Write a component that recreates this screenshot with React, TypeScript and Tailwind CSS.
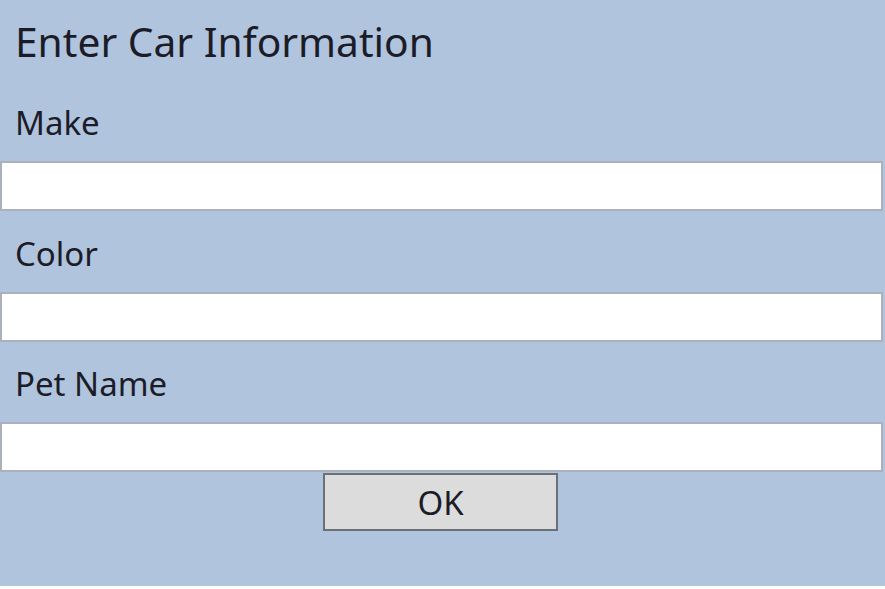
import * as React from 'react';

function Field({ label, top }: { label: string; top: string }) {
  return (
    <>
      <div className={`${top} pl-[15px] text-[33px] leading-none text-[#1c1c28]`}>{label}</div>
      <input
        type="text"
        className="mt-[22px] h-[50px] w-[883px] border-2 border-[#aab1ba] bg-white outline-none"
      />
    </>
  );
}

export default function App() {
  return (
    <div className="h-[589px] w-[885px] bg-white" style={{ fontFamily: '"Noto Sans", "Open Sans", sans-serif' }}>
      <div className="flex h-[586px] w-[885px] flex-col bg-[#b0c4de]">
        {/* Heading */}
        <div className="pl-[15px] pt-[21px] text-[40.7px] leading-none text-[#1c1c28]">Enter Car Information</div>

        <Field label="Make" top="mt-[44px]" />
        <Field label="Color" top="mt-[26px]" />
        <Field label="Pet Name" top="mt-[25px]" />

        <button className="ml-[323px] mt-[1px] flex h-[58px] w-[235px] items-center justify-center border-2 border-[#6b6f78] bg-[#dcdcdc] pt-[2px] text-[33px] leading-none text-[#1c1c28]">
          OK
        </button>
      </div>
    </div>
  );
}
